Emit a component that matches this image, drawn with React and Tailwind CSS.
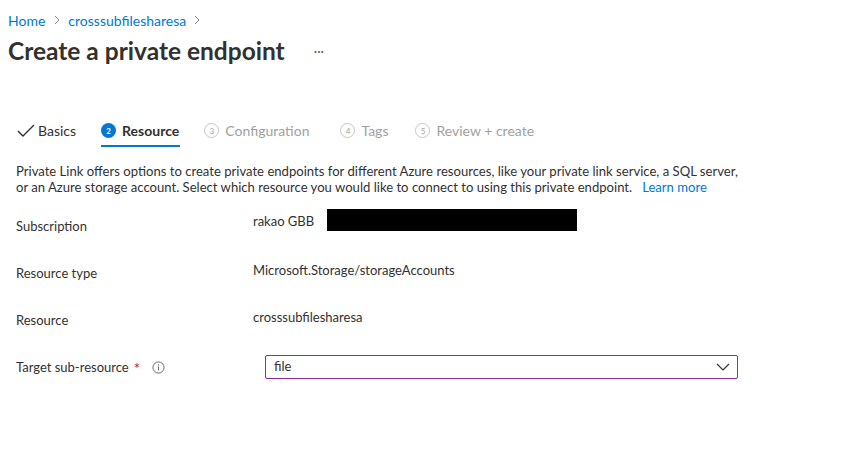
import React from "react";

const font = { fontFamily: 'Lato, "Noto Sans", sans-serif' };

function Circle({ n, active }) {
  return active ? (
    <span className="inline-flex items-center justify-center w-[15px] h-[15px] rounded-full bg-[#0078d4] text-white text-[8px] font-bold mr-[6px]">{n}</span>
  ) : (
    <span className="inline-flex items-center justify-center w-[15px] h-[15px] rounded-full border border-[#c8c6c4] text-[#a19f9d] text-[8px] mr-[6px]">{n}</span>
  );
}

function Chevron() {
  return (
    <svg width="8" height="10" viewBox="0 0 8 10"><path d="M2 1l4 4-4 4" fill="none" stroke="#8a8886" strokeWidth="1" /></svg>
  );
}

export default function App() {
  return (
    <div className="w-[851px] h-[458px] bg-white text-[#323130]" style={font}>
      <div className="pl-[8px] pt-[16px] flex items-center text-[14px] text-[#0078d4] h-[24px]">
        <span>Home</span>
        <span className="ml-[8px] mr-[7px]"><Chevron /></span>
        <span>crosssubfilesharesa</span>
        <span className="mx-[7px]"><Chevron /></span>
      </div>
      <div className="pl-[8px] mt-[13px] flex items-center h-[28px]">
        <h1 className="text-[24.5px] font-bold text-[#323130]">Create a private endpoint</h1>
        <span className="ml-[29px] text-[#605e5c] text-[13px] mt-[2px]">···</span>
      </div>
      <div className="mt-[52px] pl-[17px] flex items-stretch h-[30px] text-[14px]">
        <div className="flex items-center pb-[3px]">
          <svg width="18" height="14" viewBox="0 0 18 14" className="mr-[3px]"><path d="M1 7l5 5L17 1" fill="none" stroke="#323130" strokeWidth="1.4" /></svg>
          <span>Basics</span>
        </div>
        <div className="ml-[25px] flex items-center border-b-2 border-[#0078d4] pb-[1px] pr-[1px]">
          <Circle n="2" active />
          <span className="font-bold">Resource</span>
        </div>
        <div className="ml-[24px] flex items-center pb-[3px] text-[#a19f9d]">
          <Circle n="3" />
          <span>Configuration</span>
        </div>
        <div className="ml-[31px] flex items-center pb-[3px] text-[#a19f9d]">
          <Circle n="4" />
          <span>Tags</span>
        </div>
        <div className="ml-[27px] flex items-center pb-[3px] text-[#a19f9d]">
          <Circle n="5" />
          <span>Review + create</span>
        </div>
      </div>
      <div className="mt-[16px] pl-[16px] text-[13.1px] leading-[16px] flex flex-col">
        <div>Private Link offers options to create private endpoints for different Azure resources, like your private link service, a SQL server,</div>
        <div className="flex items-center">
          <span>or an Azure storage account. Select which resource you would like to connect to using this private endpoint.</span>
          <span className="ml-[10px] text-[#0078d4]">Learn more</span>
        </div>
      </div>
      <div className="mt-[14px] pl-[16px] text-[13px] flex flex-col">
        <div className="h-[47px] flex items-start">
          <div className="w-[237px] pt-[8px]">Subscription</div>
          <div className="flex items-center">
            <span className="pt-[3px]">rakao GBB</span>
            <span className="ml-[13px] w-[250px] h-[22px] bg-black inline-block" />
          </div>
        </div>
        <div className="h-[47px] flex items-start">
          <div className="w-[237px] pt-[8px]">Resource type</div>
          <div className="pt-[5px]">Microsoft.Storage/storageAccounts</div>
        </div>
        <div className="h-[47px] flex items-start">
          <div className="w-[237px] pt-[8px]">Resource</div>
          <div className="pt-[5px]">crosssubfilesharesa</div>
        </div>
        <div className="h-[47px] flex items-start">
          <div className="w-[249px] pt-[8px] flex items-center">
            <span>Target sub-resource</span>
            <span className="text-[#a4262c] ml-[5px] text-[15px] leading-[13px] mt-[2px]">*</span>
            <svg width="13" height="13" viewBox="0 0 14 14" className="ml-[12px]"><circle cx="7" cy="7" r="6" fill="none" stroke="#605e5c" strokeWidth="1" /><path d="M7 6v4" stroke="#605e5c" strokeWidth="1" /><circle cx="7" cy="4.2" r="0.7" fill="#605e5c" /></svg>
          </div>
          <div className="mt-[5px] w-[473px] h-[24px] border border-[#8a2da5] rounded-[2px] flex items-center justify-between pl-[8px] pr-[7px]">
            <span>file</span>
            <svg width="14" height="8" viewBox="0 0 14 8"><path d="M1 1l6 6 6-6" fill="none" stroke="#323130" strokeWidth="1.2" /></svg>
          </div>
        </div>
      </div>
    </div>
  );
}
